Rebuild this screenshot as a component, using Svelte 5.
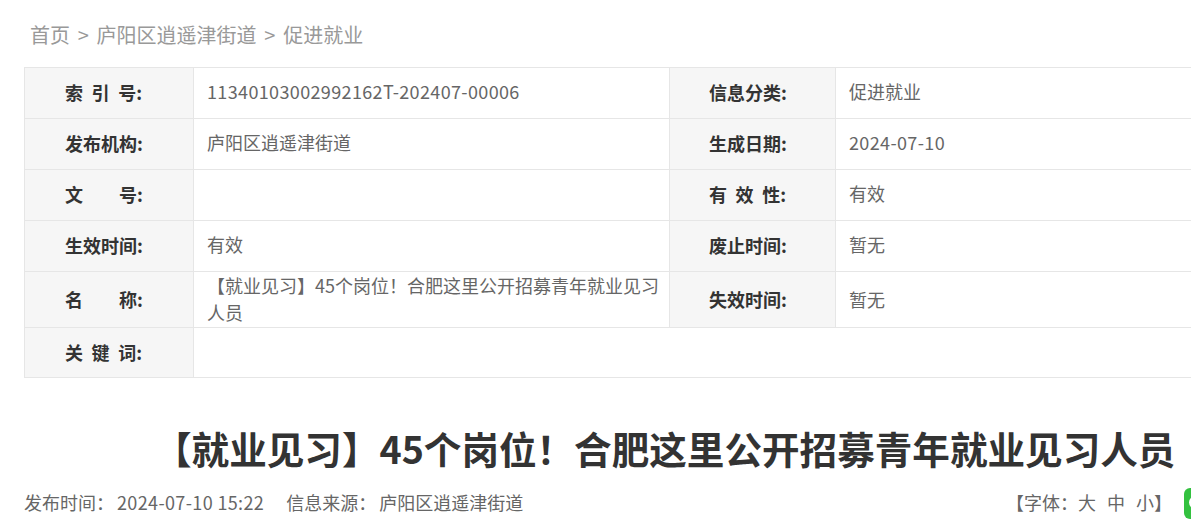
<script>
  const rows = [
    { h: 'r', cells: [['索 引 号:', '11340103002992162T-202407-00006'], ['信息分类:', '促进就业']] },
    { h: 'r', cells: [['发布机构:', '庐阳区逍遥津街道'], ['生成日期:', '2024-07-10']] },
    { h: 'r', cells: [['文\u3000\u3000号:', ''], ['有 效 性:', '有效']] },
    { h: 'r', cells: [['生效时间:', '有效'], ['废止时间:', '暂无']] },
    { h: 'tall', cells: [['名\u3000\u3000称:', '【就业见习】45个岗位！合肥这里公开招募青年就业见习人员'], ['失效时间:', '暂无']] }
  ];
  const isNum = (v) => /^\d/.test(v);
</script>

<div class="page">
  <nav class="crumb">
    <a href="#a">首页</a><span class="sep">&gt;</span><a href="#b">庐阳区逍遥津街道</a><span class="sep">&gt;</span><a href="#c">促进就业</a>
  </nav>

  <table class="info">
    <colgroup>
      <col class="c1" /><col class="c2" /><col class="c3" /><col class="c4" />
    </colgroup>
    <tbody>
      {#each rows as row}
        <tr class={row.h}>
          {#each row.cells as cell}
            <th>{cell[0]}</th>
            <td class:num={isNum(cell[1])}>{cell[1]}</td>
          {/each}
        </tr>
      {/each}
      <tr class="last">
        <th>关 键 词:</th>
        <td colspan="3"></td>
      </tr>
    </tbody>
  </table>

  <h1>【就业见习】45个岗位！合肥这里公开招募青年就业见习人员</h1>

  <div class="meta">
    <div class="left">
      <span>发布时间：</span><span class="date">2024-07-10 15:22</span><span class="src">信息来源：</span><span>庐阳区逍遥津街道</span>
    </div>
    <div class="right">
      <span class="fontsize">【字体：<a href="#d">大</a><a href="#e">中</a><a href="#f">小</a>】</span>
      <svg class="share" viewBox="0 0 30 31" aria-hidden="true">
        <rect width="30" height="31" rx="6" fill="#33c13f" />
        <ellipse cx="13" cy="14.5" rx="8" ry="7" fill="#fff" />
      </svg>
    </div>
  </div>
</div>

<style>
  :global(body) {
    margin: 0;
    background: #fff;
    overflow: hidden;
  }
  .page {
    width: 1191px;
    height: 530px;
    overflow: hidden;
    box-sizing: border-box;
    padding: 20px 0 0 24px;
    font-family: "Noto Sans CJK SC", "Liberation Sans", sans-serif;
    color: #666;
  }
  .crumb {
    display: flex;
    align-items: center;
    height: 30px;
    padding-left: 6px;
    font-size: 20px;
    line-height: 30px;
    color: #999;
  }
  .crumb a {
    color: inherit;
    text-decoration: none;
  }
  .sep {
    margin: 0 7.75px;
  }
  .info {
    margin-top: 17px;
    width: 1200px;
    table-layout: fixed;
    border-collapse: collapse;
    font-size: 18px;
  }
  .c1 { width: 169px; }
  .c2 { width: 476px; }
  .c3 { width: 166px; }
  .info th, .info td {
    border: 1px solid #e6e6e6;
    box-sizing: border-box;
    line-height: 27px;
    text-align: left;
    color: #666;
  }
  .info th {
    background: #f6f6f6;
    font-weight: 700;
    color: #333;
    padding: 0 0 1px 40px;
    white-space: pre;
    word-spacing: 4.5px;
  }
  .info th:nth-of-type(2) { padding-left: 39px; }
  .info td {
    font-weight: 400;
    padding: 0 4px 3px 13px;
  }
  .info .tall td { padding-bottom: 1px; }
  .info td.num { letter-spacing: 0.36px; }
  .r { height: 51px; }
  .tall { height: 56px; }
  .last { height: 50px; }
  h1 {
    margin: 44px 0 0;
    padding-left: 130px;
    font-size: 37.6px;
    line-height: 52px;
    font-weight: 700;
    color: #333;
    white-space: nowrap;
  }
  .meta {
    display: flex;
    justify-content: space-between;
    align-items: flex-start;
    margin-top: 13px;
    height: 32px;
    font-size: 18px;
    line-height: 30px;
    color: #666;
    width: 1190px;
  }
  .left span { white-space: nowrap; }
  .date { margin: 0 22px 0 3px; letter-spacing: 0.36px; }
  .src { margin-right: 3px; }
  .right {
    display: flex;
    align-items: flex-start;
  }
  .fontsize a {
    color: inherit;
    text-decoration: none;
    margin-right: 11px;
  }
  .fontsize a:last-child { margin-right: 0; }
  .share {
    display: block;
    width: 30px;
    height: 31px;
    margin: 1px 0 0 12px;
  }
</style>
